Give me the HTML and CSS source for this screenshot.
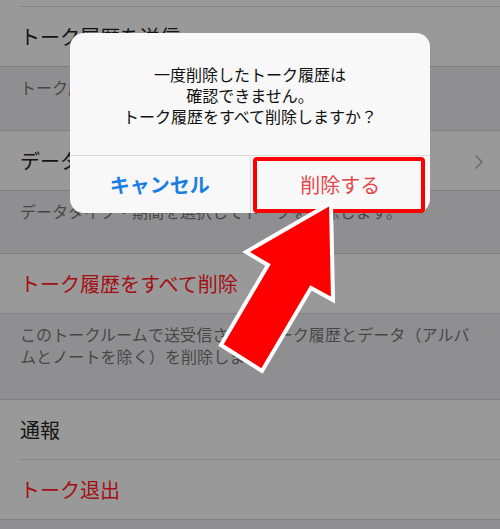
FILE: index.html
```html
<!DOCTYPE html>
<html lang="ja">
<head>
    <meta charset="UTF-8">
    <meta name="viewport" content="width=device-width, initial-scale=1.0">
    <title>トーク設定</title>
    <link rel="stylesheet" href="styles.css">
</head>
<body>
    <div class="screen">
        <!-- Settings list (dimmed behind the alert) -->
        <div class="group group-first">
            <div class="cell">トーク背景</div>
            <div class="cell">トーク履歴を送信</div>
        </div>
        <div class="note">トーク履歴をテキストファイルで送信します。</div>

        <div class="group">
            <div class="cell cell-link">
                データを選択して削除
                <svg class="chevron" width="10" height="16" viewBox="0 0 10 16">
                    <polyline points="1.5,1.5 8,8 1.5,14.5" fill="none" stroke="#6e6e70" stroke-width="1.6"/>
                </svg>
            </div>
        </div>
        <div class="note note-short">データタイプ・期間を選択してトークを削除します。</div>

        <div class="group">
            <div class="cell danger">トーク履歴をすべて削除</div>
        </div>
        <div class="note note-long">このトークルームで送受信されたトーク履歴とデータ（アルバムとノートを除く）を削除します。</div>

        <div class="group">
            <div class="cell">通報</div>
            <div class="cell danger">トーク退出</div>
        </div>

        <!-- Alert -->
        <div class="alert">
            <div class="alert-message">
                一度削除したトーク履歴は<br>
                確認できません。<br>
                トーク履歴をすべて削除しますか？
            </div>
            <div class="alert-actions">
                <div class="alert-btn cancel">キャンセル</div>
                <div class="alert-btn destructive">削除する</div>
            </div>
        </div>

        <!-- Annotation -->
        <div class="highlight"></div>
        <svg class="pointer" width="500" height="529" viewBox="0 0 500 529">
            <polygon points="331,203 333,300 311,288 262,371 221,345 268,265 246,252"
                     fill="#ff0000" stroke="#ffffff" stroke-width="4" stroke-linejoin="miter"/>
        </svg>
    </div>
</body>
</html>
```

FILE: styles.css
```css
body {
    margin: 0;
    padding: 0;
    background-color: #8f8f92;
    font-family: "Noto Sans CJK JP", "Noto Sans", sans-serif;
}

.screen {
    position: relative;
    width: 500px;
    height: 529px;
    overflow: hidden;
}

/* list */
.group {
    background-color: #999999;
    border-top: 1px solid #808080;
    border-bottom: 1px solid #808080;
}

.group-first {
    margin-top: -54px;
}

.cell {
    height: 59px;
    display: flex;
    align-items: center;
    padding: 0 20px;
    font-size: 20px;
    color: #141414;
    position: relative;
}

.cell + .cell {
    border-top: 1px solid #848484;
    margin-left: 20px;
    padding-left: 0;
}

.cell-link {
    justify-content: space-between;
}

.chevron {
    margin-right: -4px;
    margin-top: 2px;
}

.danger {
    color: #a20f14;
}

.note {
    padding: 9px 20px 32px;
    font-size: 16px;
    line-height: 22px;
    color: #474747;
}

.note-short {
    padding-bottom: 31px;
}

.note-long {
    padding-right: 16px;
    letter-spacing: 0.1px;
}

/* alert */
.alert {
    position: absolute;
    left: 70px;
    top: 33px;
    width: 360px;
    height: 180px;
    background-color: #f8f8f8;
    border-radius: 14px;
    display: flex;
    flex-direction: column;
    overflow: hidden;
}

.alert-message {
    height: 122px;
    box-sizing: border-box;
    padding-top: 31px;
    text-align: center;
    font-size: 16px;
    line-height: 21px;
    color: #111;
}

.alert-actions {
    flex: 1;
    display: flex;
    border-top: 1px solid #d9d9d9;
}

.alert-btn {
    flex: 1;
    display: flex;
    align-items: center;
    justify-content: center;
    font-size: 20px;
}

.alert-btn + .alert-btn {
    border-left: 1px solid #d9d9d9;
}

.cancel {
    color: #1a7fe4;
    font-weight: bold;
}

.destructive {
    color: #e4474a;
}

/* annotation */
.highlight {
    position: absolute;
    left: 253px;
    top: 157px;
    width: 164px;
    height: 48px;
    border: 4px solid #ff0000;
    border-radius: 4px;
}

.pointer {
    position: absolute;
    left: 0;
    top: 0;
}
```
